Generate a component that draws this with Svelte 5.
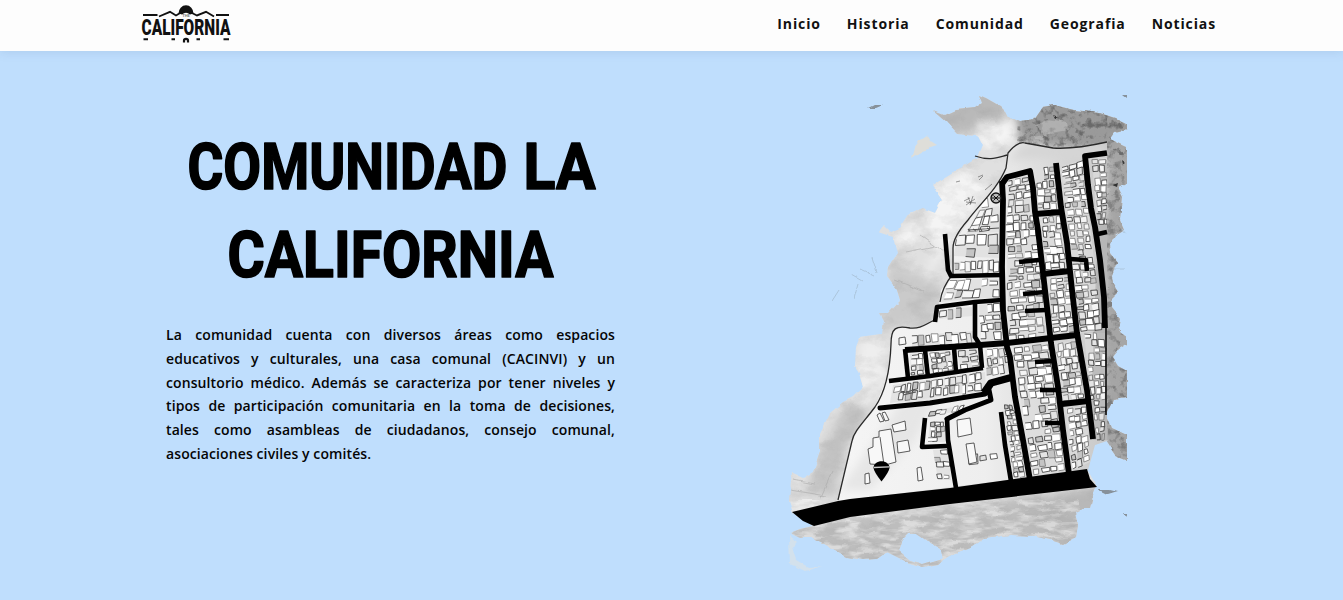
<script>
  const links = ['Inicio', 'Historia', 'Comunidad', 'Geografia', 'Noticias'];
  const lines = [
    'La comunidad cuenta con diversos áreas como espacios',
    'educativos y culturales, una casa comunal (CACINVI) y un',
    'consultorio médico. Además se caracteriza por tener niveles y',
    'tipos de participación comunitaria en la toma de decisiones,',
    'tales como asambleas de ciudadanos, consejo comunal,',
    'asociaciones civiles y comités.'
  ];

  let seed = 20;
  const rnd = () => {
    seed = (seed * 16807) % 2147483647;
    return seed / 2147483647;
  };

  // City blocks: four corners (clockwise from top left), columns, rows, density
  const blocks = [
    [[1008, 180], [1030, 176], [1034, 211], [1008, 214], 3, 5, 0.95],
    [[1006, 216], [1036, 214], [1046, 339], [1009, 342], 4, 17, 0.9],
    [[1036, 168], [1054, 166], [1058, 209], [1038, 210], 3, 6, 0.9],
    [[1040, 217], [1060, 216], [1066, 269], [1046, 270], 3, 7, 0.95],
    [[1047, 278], [1069, 276], [1075, 331], [1053, 334], 3, 8, 0.95],
    [[1062, 166], [1083, 160], [1089, 215], [1066, 215], 3, 8, 0.95],
    [[1067, 216], [1089, 216], [1102, 330], [1080, 333], 3, 17, 0.95],
    [[1092, 159], [1107, 158], [1107, 225], [1097, 226], 2, 10, 0.95],
    [[1084, 333], [1106, 333], [1106, 400], [1091, 401], 3, 10, 0.95],
    [[1092, 401], [1106, 400], [1104, 440], [1096, 440], 2, 6, 0.9],
    [[1013, 347], [1048, 344], [1065, 471], [1032, 475], 4, 17, 0.88],
    [[1056, 344], [1076, 340], [1084, 400], [1062, 402], 3, 8, 0.95],
    [[1066, 408], [1086, 406], [1090, 462], [1072, 470], 3, 8, 0.95],
    [[1004, 405], [1014, 404], [1026, 476], [1014, 478], 2, 14, 1],
    [[979, 210], [999, 206], [999, 232], [966, 234], 3, 3, 0.85],
    [[957, 236], [999, 233], [999, 258], [954, 256], 4, 2, 0.65],
    [[954, 262], [999, 260], [999, 272], [954, 273], 8, 1, 0.95],
    [[950, 280], [999, 279], [999, 297], [940, 302], 6, 2, 0.85],
    [[940, 310], [972, 307], [972, 316], [939, 319], 4, 1, 0.8],
    [[979, 305], [1000, 303], [1003, 341], [981, 341], 3, 4, 0.7],
    [[912, 336], [973, 331], [975, 342], [912, 347], 9, 1, 0.9],
    [[910, 354], [923, 353], [925, 375], [911, 377], 2, 4, 0.9],
    [[930, 353], [951, 351], [953, 371], [932, 374], 4, 4, 0.9],
    [[958, 351], [977, 349], [979, 367], [960, 370], 2, 3, 0.8],
    [[893, 385], [985, 372], [986, 391], [890, 403], 15, 2, 0.92],
    [[985, 350], [1007, 348], [1011, 372], [987, 376], 4, 3, 0.9],
    [[930, 411], [965, 405], [963, 410], [928, 417], 6, 1, 0.9],
    [[930, 422], [945, 421], [945, 442], [928, 442], 3, 4, 0.85],
    [[933, 450], [948, 450], [951, 480], [938, 480], 2, 5, 0.6],
    [[967, 446], [997, 443], [1002, 470], [968, 474], 3, 3, 0.45],
    [[976, 202], [996, 196], [997, 205], [976, 208], 3, 1, 0.7]
  ];

  const fills = ['#fff', '#fff', '#fff', '#f4f4f4', '#e4e4e4', '#c4c4c4'];
  const houses = [];
  for (const [a, b, c, d, nx, ny, density] of blocks) {
    const at = (u, v) =>
      [0, 1].map((i) =>
        (1 - v) * ((1 - u) * a[i] + u * b[i]) + v * ((1 - u) * d[i] + u * c[i])
      );
    for (let j = 0; j < ny; j++) {
      const shift = rnd() * 0.5 - 0.25;
      for (let i = 0; i < nx; i++) {
        if (rnd() > density) continue;
        const u0 = Math.max(0, i + shift + rnd() * 0.25) / nx;
        const u1 = Math.min(nx, i + shift + 0.7 + rnd() * 0.45) / nx;
        const v0 = (j + rnd() * 0.3 - 0.05) / ny;
        const v1 = (j + 0.65 + rnd() * 0.45) / ny;
        const p = [at(u0, v0), at(u1, v0), at(u1, v1), at(u0, v1)].map((q) =>
          q.map((n) => (n + (rnd() - 0.5) * 0.9).toFixed(1)).join(' ')
        );
        houses.push({
          d: 'M' + p.join('L') + (rnd() > 0.35 ? 'Z' : ''),
          fill: fills[Math.floor(rnd() * fills.length)],
          stroke: rnd() > 0.4 ? '#1c1c1c' : '#666'
        });
      }
    }
  }
  const pads = blocks.map((b) => b.slice(0, 4).map((p) => p.join(',')).join(' '));

  const streets = [
    'M1002 184L1007 177L1030 171L1033 188L1035 212L1038 230L1043 273L1047 307L1051 343L1058 387L1063 430L1069 474',
    'M1002 181L1003 200L1002 267L1003 310L1007 347L1010 357L1015 397L1023 440L1030 480',
    'M1056 163L1061 207L1067 243L1072 290L1077 333L1087 390L1093 439',
    'M1107 153L1085 156L1088 185L1091 208L1095 227L1100 260L1104 297L1105 328',
    'M1035 214L1062 212',
    'M1043 274L1070 271',
    'M905 350L980 345L1007 343L1077 335',
    'M1062 404L1088 401'
  ];
  const lanes = [
    'M1019 262L1039 260', 'M1070 259L1086 260L1087 271', 'M1023 294L1045 292',
    'M1025 311L1046 310', 'M1098 234L1107 232', 'M905 349L908 378',
    'M925 350L928 377', 'M954 348L956 372', 'M975 303L975 337L980 345L982 368',
    'M889 381L930 376L983 368', 'M945 234L948 270L951 276L1002 275',
    'M935 322L937 307L975 302L1002 300', 'M925 418L922 447L947 446',
    'M947 418L948 440L956 488', 'M1001 412L1005 445L1011 481',
    'M1035 362L1053 361', 'M1040 390L1058 390', 'M1045 423L1063 423'
  ];
  const coast =
    'M934 111L944 115L955 110L975 108L982 103L979 95L986 98L1000 106L1012 118L1020 122L1034 120L1043 107L1055 105L1075 110L1100 113L1115 118L1127 124V129L1115 132L1110 139L1127 147V183L1118 187L1123 197L1121 220L1125 230L1115 236L1110 245L1111 254L1117 262L1112 275L1113 282L1119 292L1111 300L1112 308L1120 318L1118 328L1121 333L1127 337L1127 344L1119 349L1113 357L1118 365L1127 370V398L1114 400L1107 415L1112 428L1127 435V460L1115 455L1105 440L1095 445L1088 455L1087 470L1097 487L1093 497L1090 508L1083 508L1075 512L1078 525L1076 537L1063 544L1050 540L1033 536L1010 535L985 538L972 547L950 556L938 564L923 567L907 562L887 552L877 559L863 560L847 557L830 547L813 538L800 538L790 533L800 529L813 526L793 512L789 500L792 473L803 478L813 472L820 452V433L830 413L843 402L853 397L863 387L859 373L855 367L856 347L860 337L882 334L884 322L879 313L888 313L900 300L897 290L887 277L888 267L897 253L893 237L878 232L883 225L890 232L900 228L910 213L922 208L935 213L942 200L932 185L953 172L977 157L982 145L977 135L957 133L947 122ZM908 533L903 538L898 550L910 560L923 564L943 558L940 548L927 540L917 533Z';
  const town =
    'M1023 142L1053 148L1083 147L1107 142V441L1095 445L1088 470L838 501L847 460L853 437L875 407L888 375L892 332L900 327L918 328L935 320L939 305L941 290L952 276L954 243L973 215L998 183L1006 168L1006 156L1010 150Z';
</script>

<div class="page">
  <header>
    <a class="logo" href="#inicio" aria-label="La California">
      <svg viewBox="140 3 92 42" width="92" height="42">
        <path d="M178.500 13.500a7.500 8.200 0 0 1 15 0L190 14.500Q186 11 182 14.500Z" fill="#111" />
        <g fill="none" stroke="#111" stroke-width="1.900">
          <path d="M143 15H157.500M159 16.500L170 11.800L176 15.500L181 12.500M191 12.500L197 15.500L206 11.800L214 16.500M216 15H229" />
          <path d="M143.500 39.300H148M171.500 39.300H175M196.500 39.300H200M223.500 39.300H229" />
          <path d="M184 42.500V40.500Q184 38.800 186 38.800T188 40.500V42.500" stroke-width="2.200" />
        </g>
        <text x="186" y="17.200" class="the">THE</text>
        <text x="141.500" y="34.700" class="brand" textLength="89" lengthAdjust="spacingAndGlyphs">CALIFORNIA</text>
      </svg>
    </a>
    <nav>
      {#each links as link}
        <a href={'#' + link.toLowerCase()}>{link}</a>
      {/each}
    </nav>
  </header>

  <main>
    <section class="intro">
      <h1>
        <svg viewBox="0 0 450 176" width="450" height="176">
          <text y="67"><tspan x="21.500" textLength="320" lengthAdjust="spacingAndGlyphs">COMUNIDAD</tspan> <tspan x="357.500" textLength="72" lengthAdjust="spacingAndGlyphs">LA</tspan></text>
          <text x="61.500" y="155" textLength="326" lengthAdjust="spacingAndGlyphs">CALIFORNIA</text>
        </svg>
      </h1>
      <p>
        {#each lines as line}<span>{line}</span>{/each}
      </p>
    </section>

    <svg class="map" viewBox="780 90 350 485" width="350" height="485">
      <defs>
        <clipPath id="land"><path d={coast} clip-rule="evenodd" /></clipPath>
        <clipPath id="town"><path d={town} /></clipPath>
        <filter id="soft" x="-20%" y="-20%" width="140%" height="140%"><feGaussianBlur stdDeviation="4" /></filter>
        <filter id="edge"><feTurbulence type="fractalNoise" baseFrequency="0.070" numOctaves="3" seed="4" /><feDisplacementMap in="SourceGraphic" scale="5" xChannelSelector="R" yChannelSelector="G" /><feGaussianBlur stdDeviation="0.650" /></filter>
        <filter id="grain" x="0" y="0" width="100%" height="100%">
          <feTurbulence type="fractalNoise" baseFrequency="0.045 0.07" numOctaves="4" seed="7" />
          <feColorMatrix values="0 0 0 0 0.35  0 0 0 0 0.35  0 0 0 0 0.35  1.600 0 0 0 -0.680" />
        </filter>
        <filter id="scrub" x="0" y="0" width="100%" height="100%">
          <feTurbulence type="fractalNoise" baseFrequency="0.050 0.180" numOctaves="3" seed="12" />
          <feColorMatrix values="0 0 0 0 1  0 0 0 0 1  0 0 0 0 1  3 0 0 0 -1.200" />
        </filter>
        <filter id="speckle" x="0" y="0" width="100%" height="100%" color-interpolation-filters="sRGB">
          <feTurbulence type="fractalNoise" baseFrequency="0.14" numOctaves="3" seed="31" />
          <feColorMatrix values="0 0 0 0 0.3  0 0 0 0 0.3  0 0 0 0 0.3  4 0 0 0 -1.950" />
        </filter>
        <linearGradient id="blockShade" x1="0" x2="1">
          <stop offset="0" stop-color="#f5f5f5" /><stop offset="0.550" stop-color="#eee" /><stop offset="1" stop-color="#c8c8c8" />
        </linearGradient>
      </defs>

      <g filter="url(#edge)">
        <g clip-path="url(#land)">
          <rect x="780" y="90" width="350" height="485" fill="#e0e0e0" />
          <g filter="url(#soft)">
            <path d="M925 90H1010L1006 118L985 130L940 135Z" fill="#b9b9b9" />
            <path d="M980 122L1015 122L1014 140L990 150L975 140Z" fill="#f4f4f4" />
            <path d="M1015 115L1040 95H1140V160L1090 150L1020 142Z" fill="#9a9a9a" />
            <path d="M1107 140H1135V480H1100Z" fill="#a6a6a6" />
            <path d="M930 190L970 170L990 185L950 240L920 290L940 240L900 245L895 235L930 215Z" fill="#f4f4f4" />
            <path d="M890 265L920 275L945 290L935 320L890 328L880 340Z" fill="#cacaca" />
            <path d="M820 450L845 405L875 400L846 450L836 495H805Z" fill="#c6c6c6" />
            <path d="M860 340H885V380L865 410L855 395Z" fill="#eee" />
            <path d="M790 526L950 506L1095 490V550L940 570H790Z" fill="#bdbdbd" />
            <path d="M1020 500L1100 487V530L1070 550L1030 530Z" fill="#b8b8b8" />
          </g>
          <rect x="780" y="90" width="350" height="485" filter="url(#grain)" opacity="0.400" />
          <rect x="785" y="500" width="295" height="70" filter="url(#scrub)" opacity="0.480" />
          <rect x="1015" y="95" width="115" height="60" filter="url(#speckle)" opacity="0.600" />
          <rect x="1107" y="150" width="22" height="310" filter="url(#speckle)" opacity="0.450" />
          <path d="M1035 126L1048 120L1067 123L1068 130L1045 134ZM1033 137L1044 135L1043 140H1034Z" fill="#c6c6c6" opacity="0.500" />
          <path d="M1053 115L1058 118L1055 119ZM1121 160L1125 163L1122 165ZM1112 185L1118 183L1117 187Z" fill="#333" />
          <g fill="none" stroke="#aaa" stroke-width="0.600">
            <path d="M790 490L826 496M793 480L815 484M832 472L820 499M895 280L925 292M920 235L944 252M905 252L935 246" />
          </g>
        </g>
        <path d="M911 158L914 147L920 139L926 135L930 141L938 146L922 151Z" fill="#deded9" />
        <path d="M868 108L874 105L882 105L875 108ZM1122 94H1127V98ZM1098 490L1110 490L1118 492L1108 495ZM1124 513H1127V517Z" fill="#87919a" />
        <path d="M789 535L797 542L792 547L796 560L808 567L822 566L805 571L790 564Z" fill="#d3e1ec" />
        <path d="M877 273L872 257M875 276L860 269M863 281L851 274M831 302L838 291M854 299L858 284M1114 269H1124M1122 229L1126 234" fill="none" stroke="#a9c2d8" stroke-width="0.900" />
      </g>

      <path d={town} fill="url(#blockShade)" />
      <g clip-path="url(#town)">
        <g filter="url(#soft)" fill="#d5d5d5">
          <path d="M1008 160L1025 144L1107 145V165L1060 157Z" />
          <path d="M910 390H940L915 440L870 490H840Z" fill="#e6e6e6" />
        </g>
        {#each pads.slice(0, 29) as points}<polygon {points} fill="#ddd" opacity="0.700" />{/each}
        <path d="M1100 160H1107V440H1090Z" fill="#aaa" opacity="0.600" />
        {#each houses as h}
          <path d={h.d} fill={h.fill} stroke={h.stroke} stroke-width="0.700" />
        {/each}
      </g>

      <g fill="#f8f8f8" stroke="#333" stroke-width="0.800">
        <path d="M879 431L891 429L896 462L885 465L870 464L868 449L873 447V438L879 437Z" />
        <path d="M880 437L884 465M957 420L970 418L972 434L958 437ZM899 338L905 337L906 344L899 345Z" />
        <path d="M892 425L905 421L906 430L894 432ZM897 442L908 440L910 451L898 453ZM966 444L974 443L977 462L969 464ZM917 468L921 467L923 480L918 481ZM865 474L869 473L870 483L865 484Z" />
        <path d="M877 415L880 413L884 421L880 422ZM882 413L885 412L889 420L885 421Z" />
      </g>

      <g fill="none" stroke="#292929" stroke-width="1.300">
        <path d="M975 156C990 161 996 158 1007 155M1107 142C1085 147 1068 149 1053 148L1025 143Q1018 141 1008 153L1006 168C998 188 979 205 968 220Q953 237 953 248V274Q942 287 940 302M935 320C925 324 922 329 910 328C896 325 891 328 891 344C890 373 884 394 875 407C863 423 854 431 852 441L838 500" />
      </g>
      <g fill="none" stroke="#000" stroke-linejoin="round">
        <g stroke-width="5.800">{#each streets as d}<path {d} />{/each}</g>
        <g stroke-width="4.600">{#each lanes as d}<path {d} />{/each}</g>
        <path d="M880 408L930 403L985 394M947 419L965 410L991 400L989 390" stroke-width="5" stroke-linecap="round" />
        <path d="M984 393L991 383L1013 377" stroke-width="7.500" />
        <path d="M1106 325V415" stroke-width="1.500" />
      </g>
      <path d="M792 512L838 501L850 499L950 488L1087 469L1090 479L1097 487L950 504L850 517L814 526L803 521Z" />
      <path d="M873.500 468C873.500 459 889.500 459 889.500 468Q889 472 881.500 481.500Q874 472 873.500 468Z" />
      <path d="M874 467.500L889 466.800" stroke="#ccc" stroke-width="1.300" />
      <circle cx="996" cy="198" r="5" fill="#bbb" stroke="#111" stroke-width="1.400" />
      <path d="M993.500 195.500L996 198L998.500 195.500M993.500 200.500L996 198L998.500 200.500M992 198H1000" fill="none" stroke="#111" />
      <g fill="none" stroke="#555" stroke-width="0.600">
        <path d="M964 201L970 198M966 205L975 199M968 197L971 204M973 196L970 205M966 202L976 203M978 177L983 175M979 180L983 176M956 182L960 181M985 190L992 184" />
        <path d="M968 230L999 228M968 229L970 231M973 229L976 231M980 228L982 231M987 228L990 230M902 393L914 390M903 395L916 392" stroke-width="1.200" />
      </g>
    </svg>
  </main>
</div>

<style>
  :global(body) { margin: 0; background: #bfdefd; }
  .page { height: 600px; overflow: hidden; background: #bfdefd; color: #050505; font-family: 'Open Sans', sans-serif; }
  header {
    position: relative; box-sizing: border-box; height: 51px; padding: 3px 127px 0 140px;
    display: flex; justify-content: space-between; align-items: flex-start;
    background: #fdfdfd; box-shadow: 0 1px 10px rgba(70, 100, 140, 0.15);
  }
  .logo { height: 42px; }
  svg { display: block; overflow: visible; }
  .brand { font: 900 22.500px Roboto, sans-serif; fill: #111; }
  .the { font: 700 4px Roboto, sans-serif; text-anchor: middle; fill: #777; }
  nav { display: flex; gap: 26px; padding-top: 9px; }
  nav a { color: #111; text-decoration: none; font-size: 14px; line-height: 24px; font-weight: 700; letter-spacing: 0.880px; }
  main { display: flex; align-items: flex-start; padding-left: 166px; }
  .intro { width: 449px; padding-top: 71px; }
  h1 { margin: 0; height: 176px; }
  h1 text { font: 700 65.500px Roboto, sans-serif; fill: #000; stroke: #000; stroke-width: 1.700; stroke-linejoin: round; }
  p { margin: 25px 0 0; font-size: 14px; line-height: 23.800px; font-weight: 600; letter-spacing: 0.100px; }
  p span { display: block; white-space: nowrap; text-align: justify; text-align-last: justify; }
  p span:last-child { text-align-last: left; }
  .map { margin: 39px 0 0 165px; flex: none; }
</style>
